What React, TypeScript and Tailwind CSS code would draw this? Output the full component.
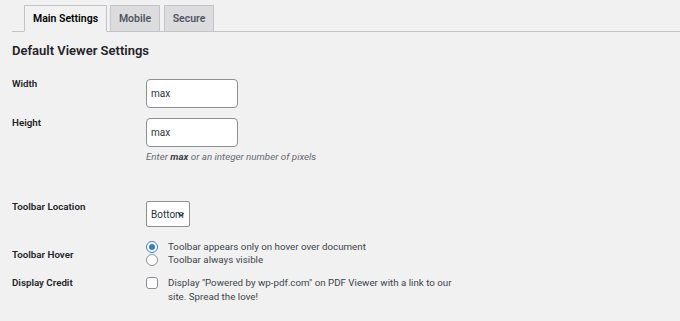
import React from "react";

export default function App() {
  return (
    <div className="w-[680px] h-[321px] bg-[#f1f1f1] overflow-hidden text-[#1d2327]" style={{ fontFamily: "Roboto, 'Noto Sans', sans-serif" }}>
      {/* Tabs */}
      <div className="ml-[12px] pt-[5px] pl-[12px] flex items-end border-b border-[#c3c4c7] h-[32px]">
        <div className="w-[83px] h-[27px] -mb-px border border-[#c3c4c7] border-b-[#f1f1f1] bg-[#f1f1f1] flex items-center justify-center text-[10.5px] font-semibold text-black">
          Main Settings
        </div>
        <div className="ml-[3px] w-[50px] h-[26px] border border-[#c3c4c7] border-b-0 bg-[#dcdcde] flex items-center justify-center text-[10.5px] font-semibold text-[#50575e]">
          Mobile
        </div>
        <div className="ml-[4px] w-[50px] h-[26px] border border-[#c3c4c7] border-b-0 bg-[#dcdcde] flex items-center justify-center text-[10.5px] font-semibold text-[#50575e]">
          Secure
        </div>
      </div>

      <div className="pl-[12px]">
        <h2 className="mt-[10px] text-[13px] leading-[18px] font-semibold">Default Viewer Settings</h2>

        {/* Width */}
        <div className="mt-[17px] flex h-[39px]">
          <div className="w-[134px] text-[9.75px] leading-[14px] font-semibold">Width</div>
          <div className="mt-[2px] w-[92px] h-[29px] bg-white border border-[#8c8f94] rounded-[4px] flex items-center px-[4px] text-[10px] text-[#2c3338]">max</div>
        </div>

        {/* Height */}
        <div className="flex">
          <div className="w-[134px] text-[9.75px] leading-[14px] font-semibold">Height</div>
          <div className="flex flex-col">
            <div className="mt-[2px] w-[92px] h-[29px] bg-white border border-[#8c8f94] rounded-[4px] flex items-center px-[4px] text-[10px] text-[#2c3338]">max</div>
            <div className="mt-[3px] text-[9.75px] leading-[14px] italic text-[#646970]">
              Enter <b className="font-bold text-[#3c434a]">max</b> or an integer number of pixels
            </div>
          </div>
        </div>

        {/* Toolbar Location */}
        <div className="mt-[36px] flex">
          <div className="w-[134px] text-[9.75px] leading-[14px] font-semibold">Toolbar Location</div>
          <div className="relative mt-[1px] w-[44px] h-[26px] bg-white border border-[#8c8f94] rounded-[2px] overflow-hidden flex items-center pl-[4px] text-[10px] text-[#2c3338]">
            <span className="whitespace-nowrap">Bottom</span>
            <svg className="absolute right-[5px] top-[10px]" width="6" height="5" viewBox="0 0 6 5">
              <path d="M0.5 1 L3 4 L5.5 1" fill="none" stroke="#2c3338" strokeWidth="1.3" />
            </svg>
          </div>
        </div>

        {/* Toolbar Hover */}
        <div className="mt-[13px] flex">
          <div className="w-[134px] mt-[8px] text-[9.75px] leading-[14px] font-semibold">Toolbar Hover</div>
          <div className="flex flex-col text-[9.75px] leading-[13px] text-[#3c434a]">
            <div className="flex items-center">
              <span className="w-[12px] h-[12px] rounded-full border border-[#3582c4] bg-white flex items-center justify-center">
                <span className="w-[6px] h-[6px] rounded-full bg-[#3582c4]" />
              </span>
              <span className="ml-[10px]">Toolbar appears only on hover over document</span>
            </div>
            <div className="flex items-center">
              <span className="w-[12px] h-[12px] rounded-full border border-[#8c8f94] bg-white" />
              <span className="ml-[10px]">Toolbar always visible</span>
            </div>
          </div>
        </div>

        {/* Display Credit */}
        <div className="mt-[10px] flex">
          <div className="w-[134px] text-[9.75px] leading-[14px] font-semibold">Display Credit</div>
          <div className="flex items-start">
            <span className="-mt-[0px] mt-[1px] w-[12px] h-[12px] rounded-[3px] border border-[#8c8f94] bg-white shrink-0" />
            <div className="ml-[10px] text-[9.75px] leading-[14px] text-[#3c434a]">
              Display "Powered by wp-pdf.com" on PDF Viewer with a link to our
              <br />
              site. Spread the love!
            </div>
          </div>
        </div>
      </div>
    </div>
  );
}
